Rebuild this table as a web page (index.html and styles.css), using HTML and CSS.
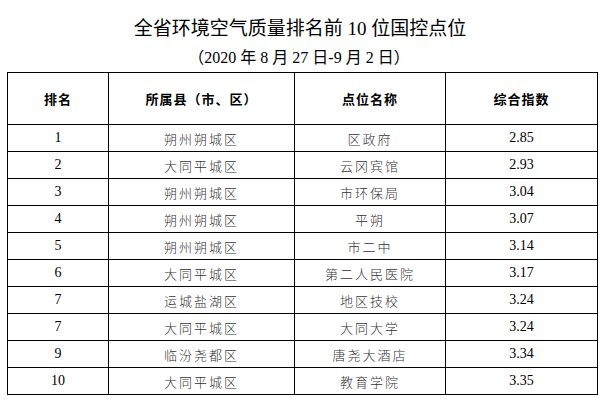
FILE: index.html
```html
<!DOCTYPE html>
<html lang="zh-CN">
<head>
<meta charset="utf-8">
<link rel="stylesheet" href="styles.css">
</head>
<body>
<div class="page">
  <h1 class="title">全省环境空气质量排名前 10 位国控点位</h1>
  <p class="subtitle">（2020 年 8 月 27 日-9 月 2 日）</p>
  <table class="rank">
    <colgroup>
      <col class="c1"><col class="c2"><col class="c3"><col class="c4">
    </colgroup>
    <thead>
      <tr><th>排名</th><th>所属县（市、区）</th><th>点位名称</th><th>综合指数</th></tr>
    </thead>
    <tbody>
      <tr><td class="num">1</td><td class="cjk">朔州朔城区</td><td class="cjk">区政府</td><td class="num">2.85</td></tr>
      <tr><td class="num">2</td><td class="cjk">大同平城区</td><td class="cjk">云冈宾馆</td><td class="num">2.93</td></tr>
      <tr><td class="num">3</td><td class="cjk">朔州朔城区</td><td class="cjk">市环保局</td><td class="num">3.04</td></tr>
      <tr><td class="num">4</td><td class="cjk">朔州朔城区</td><td class="cjk">平朔</td><td class="num">3.07</td></tr>
      <tr><td class="num">5</td><td class="cjk">朔州朔城区</td><td class="cjk">市二中</td><td class="num">3.14</td></tr>
      <tr><td class="num">6</td><td class="cjk">大同平城区</td><td class="cjk">第二人民医院</td><td class="num">3.17</td></tr>
      <tr><td class="num">7</td><td class="cjk">运城盐湖区</td><td class="cjk">地区技校</td><td class="num">3.24</td></tr>
      <tr><td class="num">7</td><td class="cjk">大同平城区</td><td class="cjk">大同大学</td><td class="num">3.24</td></tr>
      <tr><td class="num">9</td><td class="cjk">临汾尧都区</td><td class="cjk">唐尧大酒店</td><td class="num">3.34</td></tr>
      <tr><td class="num">10</td><td class="cjk">大同平城区</td><td class="cjk">教育学院</td><td class="num">3.35</td></tr>
    </tbody>
  </table>
</div>
</body>
</html>
```
FILE: styles.css
```css
html, body {
  margin: 0;
  padding: 0;
  background: #fff;
}
.page {
  width: 607px;
  padding: 17px 10px 0 7px;
  box-sizing: border-box;
  font-family: "Liberation Serif", "Noto Sans CJK SC", serif;
  color: #000;
}
.title {
  margin: 0;
  font-size: 19px;
  line-height: 23px;
  font-weight: normal;
  text-align: center;
  padding-right: 4px;
}
.subtitle {
  margin: 8px 0 4px 0;
  font-size: 16px;
  line-height: 20px;
  text-align: center;
  padding-right: 6px;
}
.rank {
  border-collapse: collapse;
  width: 590px;
  table-layout: fixed;
}
.c1 { width: 101px; }
.c2 { width: 186px; }
.c3 { width: 151px; }
.c4 { width: 152px; }
.rank th, .rank td {
  border: 1px solid #000;
  padding: 0;
  text-align: center;
  vertical-align: middle;
}
.rank th {
  height: 51px;
  font-family: "Noto Sans CJK SC", sans-serif;
  font-weight: bold;
  font-size: 13px;
  letter-spacing: 1px;
}
.rank td {
  height: 26px;
}
.num {
  font-family: "Liberation Serif", serif;
  font-size: 14px;
}
.cjk {
  font-family: "Noto Sans CJK SC", sans-serif;
  font-size: 13px;
  font-weight: 300;
  letter-spacing: 2px;
  color: #333;
  padding-top: 2px;
}
```
